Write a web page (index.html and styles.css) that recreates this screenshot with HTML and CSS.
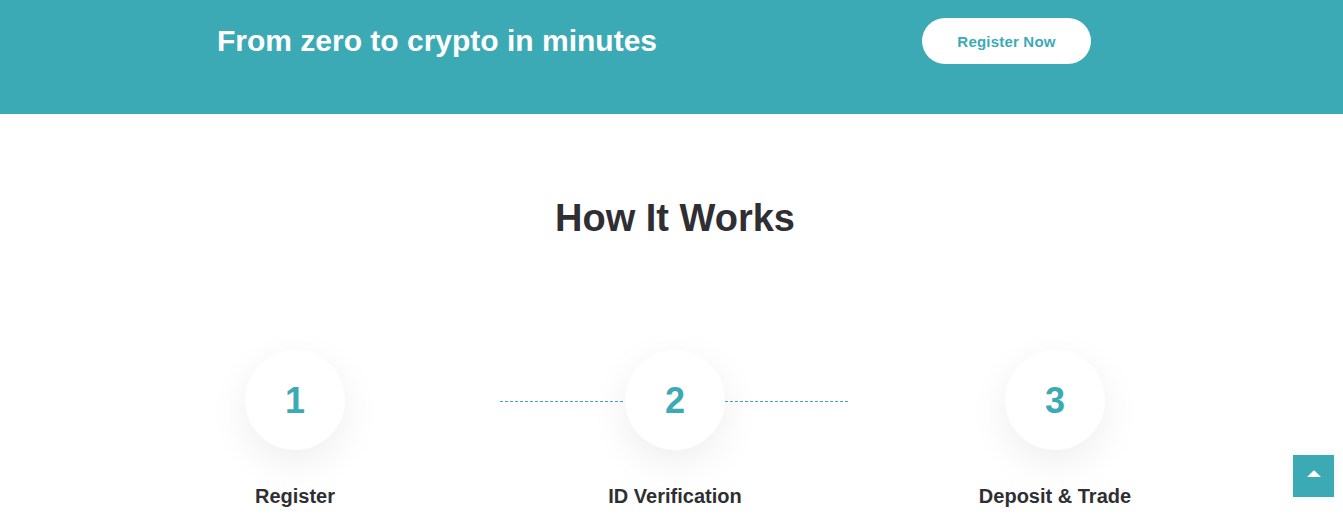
FILE: index.html
```html
<!DOCTYPE html>
<html lang="en">
<head>
  <meta charset="UTF-8">
  <meta name="viewport" content="width=device-width, initial-scale=1.0">
  <title>How It Works</title>
  <link rel="stylesheet" href="styles.css">
</head>
<body>

  <section class="cta">
    <div class="wrap">
      <div class="container cta__inner">
        <h2 class="cta__title">From zero to crypto in minutes</h2>
        <a href="#" class="cta__btn">Register Now</a>
      </div>
    </div>
  </section>

  <section class="how">
    <div class="wrap">
      <div class="container">
        <h2 class="how__title">How It Works</h2>
        <ul class="steps">
          <li class="step">
            <span class="step__num">1</span>
            <span class="step__label">Register</span>
          </li>
          <li class="step step--mid">
            <span class="step__num">2</span>
            <span class="step__label">ID Verification</span>
          </li>
          <li class="step">
            <span class="step__num">3</span>
            <span class="step__label">Deposit &amp; Trade</span>
          </li>
        </ul>
      </div>
    </div>
  </section>

  <a href="#" class="to-top" aria-label="Back to top">
    <svg width="14" height="8" viewBox="0 0 14 8">
      <path d="M0 7 L5.8 1.2 Q7 0 8.2 1.2 L14 7 Z" fill="#fff"/>
    </svg>
  </a>

</body>
</html>
```

FILE: styles.css
```css
* { padding:0; margin:0; font-family:"Liberation Sans", Arial, sans-serif; box-sizing:border-box; }
a { color:inherit; text-decoration:none; }
ul,li { list-style:none; }

:root {
  --color-teal: #3caab5;
  --color-dark: #2f2f33;
  --color-white: #ffffff;
}

body {
  background-color: var(--color-white);
  overflow: hidden;
}

/* page content sits a touch right of the window centre */
.wrap {
  padding-left: 7px;
}

.container {
  width: 1140px;
  margin: 0 auto;
}

/* top banner */
.cta {
  background-color: var(--color-teal);
  height: 114px;
  padding-top: 18px;
}

.cta__inner {
  display: flex;
  align-items: center;
  justify-content: space-between;
  padding: 0 154px 0 112px;
}

.cta__title {
  color: var(--color-white);
  font-size: 30px;
  font-weight: 700;
  line-height: 36px;
}

.cta__btn {
  display: flex;
  align-items: center;
  justify-content: center;
  width: 169px;
  height: 46px;
  border-radius: 23px;
  background-color: var(--color-white);
  color: var(--color-teal);
  font-size: 15px;
  font-weight: 700;
  letter-spacing: 0.2px;
}

/* how it works */
.how {
  padding-top: 81px;
}

.how__title {
  text-align: center;
  color: var(--color-dark);
  font-size: 38px;
  font-weight: 700;
  line-height: 46px;
  margin-bottom: 109px;
}

.steps {
  display: grid;
  grid-template-columns: repeat(3, 1fr);
}

.step {
  display: flex;
  flex-direction: column;
  align-items: center;
  position: relative;
}

.step__num {
  width: 100px;
  height: 100px;
  border-radius: 50%;
  background-color: var(--color-white);
  box-shadow: 0 12px 40px rgba(0, 0, 0, 0.07);
  display: flex;
  align-items: center;
  justify-content: center;
  padding-top: 2px;
  color: var(--color-teal);
  font-size: 36px;
  font-weight: 700;
  position: relative;
  z-index: 1;
}

/* dashed connector behind the middle circle */
.step--mid::before {
  content: "";
  position: absolute;
  top: 51px;
  left: 0;
  right: 0;
  margin: 0 15px;
  height: 1px;
  background-image: linear-gradient(to right, var(--color-teal) 3px, transparent 3px);
  background-size: 5px 1px;
  background-repeat: repeat-x;
}

.step__label {
  margin-top: 34px;
  color: var(--color-dark);
  font-size: 20px;
  font-weight: 700;
  line-height: 24px;
}

/* back to top */
.to-top {
  position: fixed;
  right: 9px;
  bottom: 18px;
  width: 41px;
  height: 42px;
  background-color: var(--color-teal);
  box-shadow: 0 0 10px rgba(0, 0, 0, 0.05);
  display: flex;
  align-items: center;
  justify-content: center;
  padding-bottom: 4px;
}
```
